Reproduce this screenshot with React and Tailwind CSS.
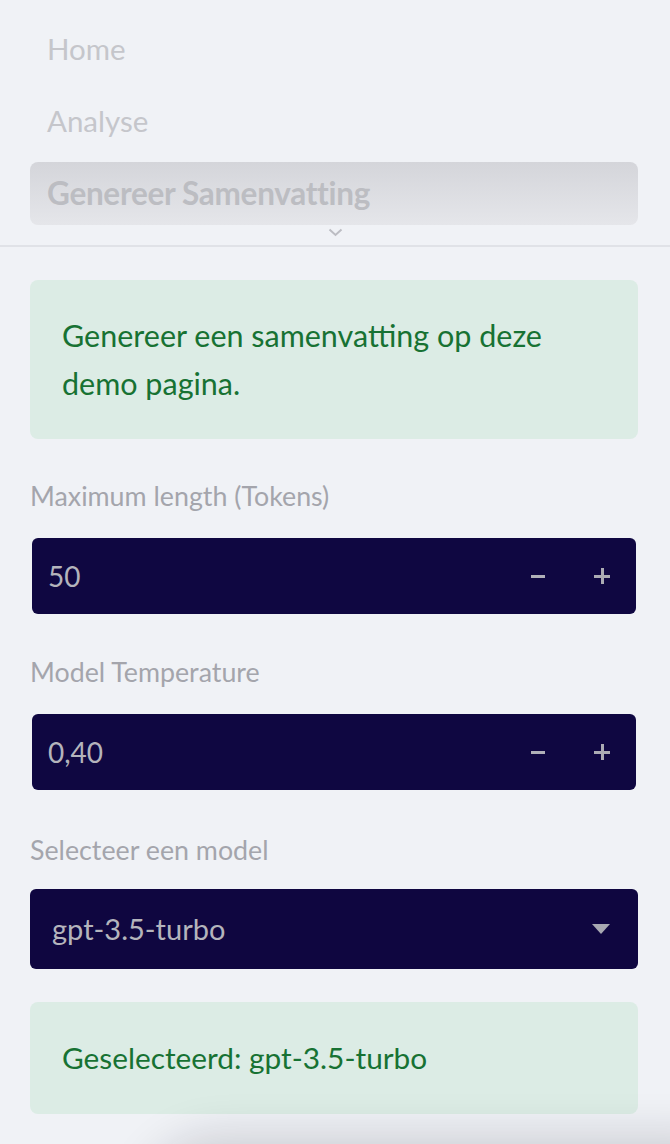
const font = { fontFamily: '"Lato", "Noto Sans", sans-serif' }

function NavItem({ label, active }) {
  if (active) {
    return (
      <div className="h-[63px] rounded-lg px-[17px] flex items-center bg-gradient-to-b from-[#d4d5da] to-[#e5e6ea]">
        <span className="text-[31.5px] font-bold text-[#bcbdc2] tracking-[-0.3px]">{label}</span>
      </div>
    )
  }
  return (
    <div className="h-[63px] px-[17px] flex items-center">
      <span className="text-[29.5px] text-[#c5c6cb]">{label}</span>
    </div>
  )
}

function NumberInput({ value }) {
  return (
    <div className="mx-[2px] h-[76px] rounded-md bg-[#0f0741] flex items-center pl-4 pr-[26px]">
      <span className="flex-1 text-[28px] text-[#b4b4bc]">{value}</span>
      <span className="w-[14px] h-[3px] bg-[#b0b0b8] mr-[49px]" />
      <span className="relative w-4 h-4">
        <span className="absolute left-0 top-[6.5px] w-4 h-[3px] bg-[#ababb3]" />
        <span className="absolute top-0 left-[6.5px] w-[3px] h-4 bg-[#ababb3]" />
      </span>
    </div>
  )
}

export default function App() {
  return (
    <div style={font} className="relative w-[670px] h-[1144px] overflow-hidden bg-[#f0f2f6]">
      <nav className="pl-[30px] pr-[32px] pt-[18px] flex flex-col gap-[9px]">
        <NavItem label="Home" />
        <NavItem label="Analyse" />
        <NavItem label="Genereer Samenvatting" active />
      </nav>
      <div className="flex justify-center pt-[3px] h-[13px]">
        <svg width="15" height="9" viewBox="0 0 15 9">
          <path d="M1.5 1.5 L7.5 7 L13.5 1.5" fill="none" stroke="#bcbdc3" strokeWidth="2" />
        </svg>
      </div>
      <div className="mt-[7px] h-[2px] bg-[#e0e2e7]" />

      <div className="pl-[30px] pr-[32px] pt-[33px]">
        <div className="rounded-lg bg-[#dcece5] px-[32px] pt-[31px] pb-[32px]">
          <p className="text-[30.5px] leading-[48px] text-[#177233]">
            Genereer een samenvatting op deze demo pagina.
          </p>
        </div>

        <div className="mt-[39px] h-[36px] flex items-center text-[26.8px] text-[#a4a5ac]">Maximum length (Tokens)</div>
        <div className="mt-[24px]">
          <NumberInput value="50" />
        </div>

        <div className="mt-[40px] h-[36px] flex items-center text-[26.8px] text-[#a4a5ac]">Model Temperature</div>
        <div className="mt-[24px]">
          <NumberInput value="0,40" />
        </div>

        <div className="mt-[42px] h-[36px] flex items-center text-[26.8px] text-[#a4a5ac]">Selecteer een model</div>
        <div className="mt-[21px] h-[80px] rounded-md bg-[#0f0640] flex items-center pl-[22px] pr-[28px]">
          <span className="flex-1 text-[29px] text-[#b4b4bc]">gpt-3.5-turbo</span>
          <svg width="18" height="10" viewBox="0 0 18 10">
            <path d="M0 0 H18 L9 10 Z" fill="#a8a8b2" />
          </svg>
        </div>

        <div className="mt-[33px] h-[112px] rounded-lg bg-[#dcece5] px-[32px] flex items-center">
          <p className="text-[29.8px] text-[#177233]">Geselecteerd: gpt-3.5-turbo</p>
        </div>
      </div>

      <div className="absolute top-full left-[140px] -right-[40px] h-40 rounded-tl-[80px] shadow-[0_-8px_45px_rgba(20,20,40,0.16)]" />
    </div>
  )
}
